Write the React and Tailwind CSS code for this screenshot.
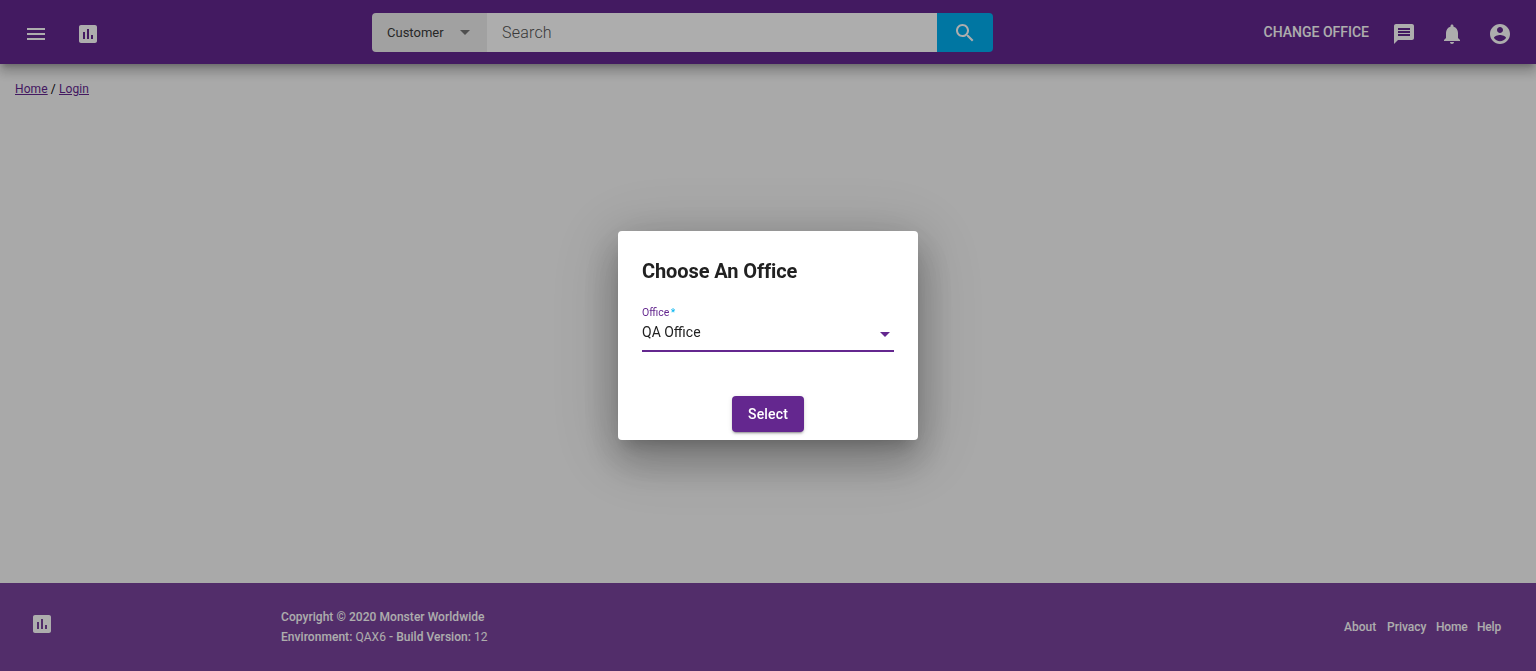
const ICONS = {
  menu: 'M3 18h18v-2H3v2zm0-5h18v-2H3v2zm0-7v2h18V6H3z',
  chart:
    'M19 3H5c-1.1 0-2 .9-2 2v14c0 1.1.9 2 2 2h14c1.1 0 2-.9 2-2V5c0-1.1-.9-2-2-2zM9 17H7v-7h2v7zm4 0h-2V7h2v10zm4 0h-2v-4h2v4z',
  search:
    'M15.5 14h-.79l-.28-.27C15.41 12.59 16 11.11 16 9.5 16 5.91 13.09 3 9.5 3S3 5.91 3 9.5 5.91 16 9.5 16c1.61 0 3.09-.59 4.23-1.57l.27.28v.79l5 4.99L20.49 19l-4.99-5zm-6 0C7.01 14 5 11.99 5 9.5S7.01 5 9.5 5 14 7.01 14 9.5 11.99 14 9.5 14z',
  chat: 'M20 2H4c-1.1 0-1.99.9-1.99 2L2 22l4-4h14c1.1 0 2-.9 2-2V4c0-1.1-.9-2-2-2zM6 9h12v2H6V9zm12 5H6v-2h12v2zm0-6H6V6h12v2z',
  bell: 'M12 22c1.1 0 2-.9 2-2h-4c0 1.1.89 2 2 2zm6-6v-5c0-3.07-1.64-5.64-4.5-6.32V4c0-.83-.67-1.5-1.5-1.5s-1.5.67-1.5 1.5v.68C7.63 5.36 6 7.92 6 11v5l-2 2v1h16v-1l-2-2z',
  account:
    'M12 2C6.48 2 2 6.48 2 12s4.48 10 10 10 10-4.48 10-10S17.52 2 12 2zm0 3c1.66 0 3 1.34 3 3s-1.34 3-3 3-3-1.34-3-3 1.34-3 3-3zm0 14.2c-2.5 0-4.71-1.28-6-3.22.03-1.99 4-3.08 6-3.08 1.99 0 5.97 1.09 6 3.08-1.29 1.94-3.5 3.22-6 3.22z',
};

function Icon({ name, className = '' }) {
  return (
    <svg viewBox="0 0 24 24" fill="currentColor" className={`size-6 shrink-0 ${className}`} aria-hidden="true">
      <path d={ICONS[name]} />
    </svg>
  );
}

function Caret() {
  return (
    <svg viewBox="0 0 10 5" fill="currentColor" className="h-[5px] w-[10px] shrink-0" aria-hidden="true">
      <path d="M0 0h10L5 5z" />
    </svg>
  );
}

function Header() {
  return (
    <header className="relative flex h-16 shrink-0 items-center justify-between bg-[#64278f] pt-1 pr-6 pl-6 text-white shadow-[0_5px_5px_-3px_rgba(0,0,0,0.2),0_8px_10px_1px_rgba(0,0,0,0.14),0_3px_14px_2px_rgba(0,0,0,0.12)]">
      <div className="flex w-[348px] gap-7">
        <Icon name="menu" />
        <Icon name="chart" />
      </div>
      <div className="mb-[3px] flex h-[39px] w-[621px] overflow-hidden rounded">
        <div className="flex w-[115px] items-center bg-[#ededed] pl-[15px] text-[#3a3a3a]">
          <span className="w-[73px] text-[13px]">Customer</span>
          <span className="text-[#757575]">
            <Caret />
          </span>
        </div>
        <div className="flex flex-1 items-center bg-white pl-[15px] text-base font-light tracking-[0.2px] text-[#555]">
          Search
        </div>
        <button className="flex w-14 items-center justify-center bg-[#00aeef]" aria-label="Search">
          <Icon name="search" />
        </button>
      </div>
      <div className="flex flex-1 items-center justify-end gap-6">
        <span className="mr-[-1px] mb-1 text-sm font-medium">CHANGE OFFICE</span>
        <Icon name="chat" />
        <Icon name="bell" />
        <Icon name="account" />
      </div>
    </header>
  );
}

function Footer() {
  return (
    <footer className="flex h-[88px] shrink-0 items-center bg-[#7a439d] pr-[35px] pl-[30px] text-xs font-medium text-white">
      <Icon name="chart" className="mt-[-6px]" />
      <div className="ml-[227px] leading-5 tracking-[0.05px]">
        <p>Copyright © 2020 Monster Worldwide</p>
        <p>
          Environment: <span className="font-normal">QAX6</span> - Build Version:{' '}
          <span className="font-normal">12</span>
        </p>
      </div>
      <nav className="ml-auto flex gap-[10px]">
        <a className="w-[33px]">About</a>
        <a className="w-[39px]">Privacy</a>
        <a className="w-[31px] tracking-[-0.2px]">Home</a>
        <a className="w-[24px] tracking-[-0.2px]">Help</a>
      </nav>
    </footer>
  );
}

function OfficeDialog() {
  return (
    <div
      role="dialog"
      className="flex h-[209px] w-[300px] flex-col rounded bg-white px-6 pt-6 pb-2 shadow-[0_11px_15px_-7px_rgba(0,0,0,0.2),0_24px_38px_3px_rgba(0,0,0,0.14),0_9px_46px_8px_rgba(0,0,0,0.12),0_11px_70px_12px_rgba(0,0,0,0.12)]"
    >
      <h2 className="text-xl leading-8 font-bold tracking-[-0.1px] text-[#212121]">Choose An Office</h2>
      <div className="mt-5 flex h-[45px] flex-col border-b-2 border-[#64278f]">
        <label className="text-[10.5px] leading-3 text-[#64278f]">
          Office<span className="ml-[-1px] text-[#00b4f0]"> *</span>
        </label>
        <div className="mt-[5px] flex items-center justify-between pr-1 text-sm leading-4 text-[#212121]">
          QA Office
          <span className="mt-[5px] text-[#64278f]">
            <Caret />
          </span>
        </div>
      </div>
      <button className="mt-auto h-9 w-[72px] self-center rounded bg-[#64278f] text-sm font-medium tracking-[0.15px] text-white shadow-[0_3px_1px_-2px_rgba(0,0,0,0.2),0_2px_2px_0_rgba(0,0,0,0.14),0_1px_5px_0_rgba(0,0,0,0.12)]">
        Select
      </button>
    </div>
  );
}

export default function App() {
  return (
    <div className="flex h-screen flex-col overflow-hidden bg-[#fafafa] font-['Roboto',sans-serif]">
      <Header />
      <main className="flex-1 px-[15px] pt-4 text-xs leading-[18px] tracking-[0.1px] text-black">
        <a className="text-[#64278f] underline">Home</a> / <a className="text-[#64278f] underline">Login</a>
      </main>
      <Footer />
      <div className="fixed inset-0 flex items-center justify-center bg-black/32">
        <OfficeDialog />
      </div>
    </div>
  );
}
